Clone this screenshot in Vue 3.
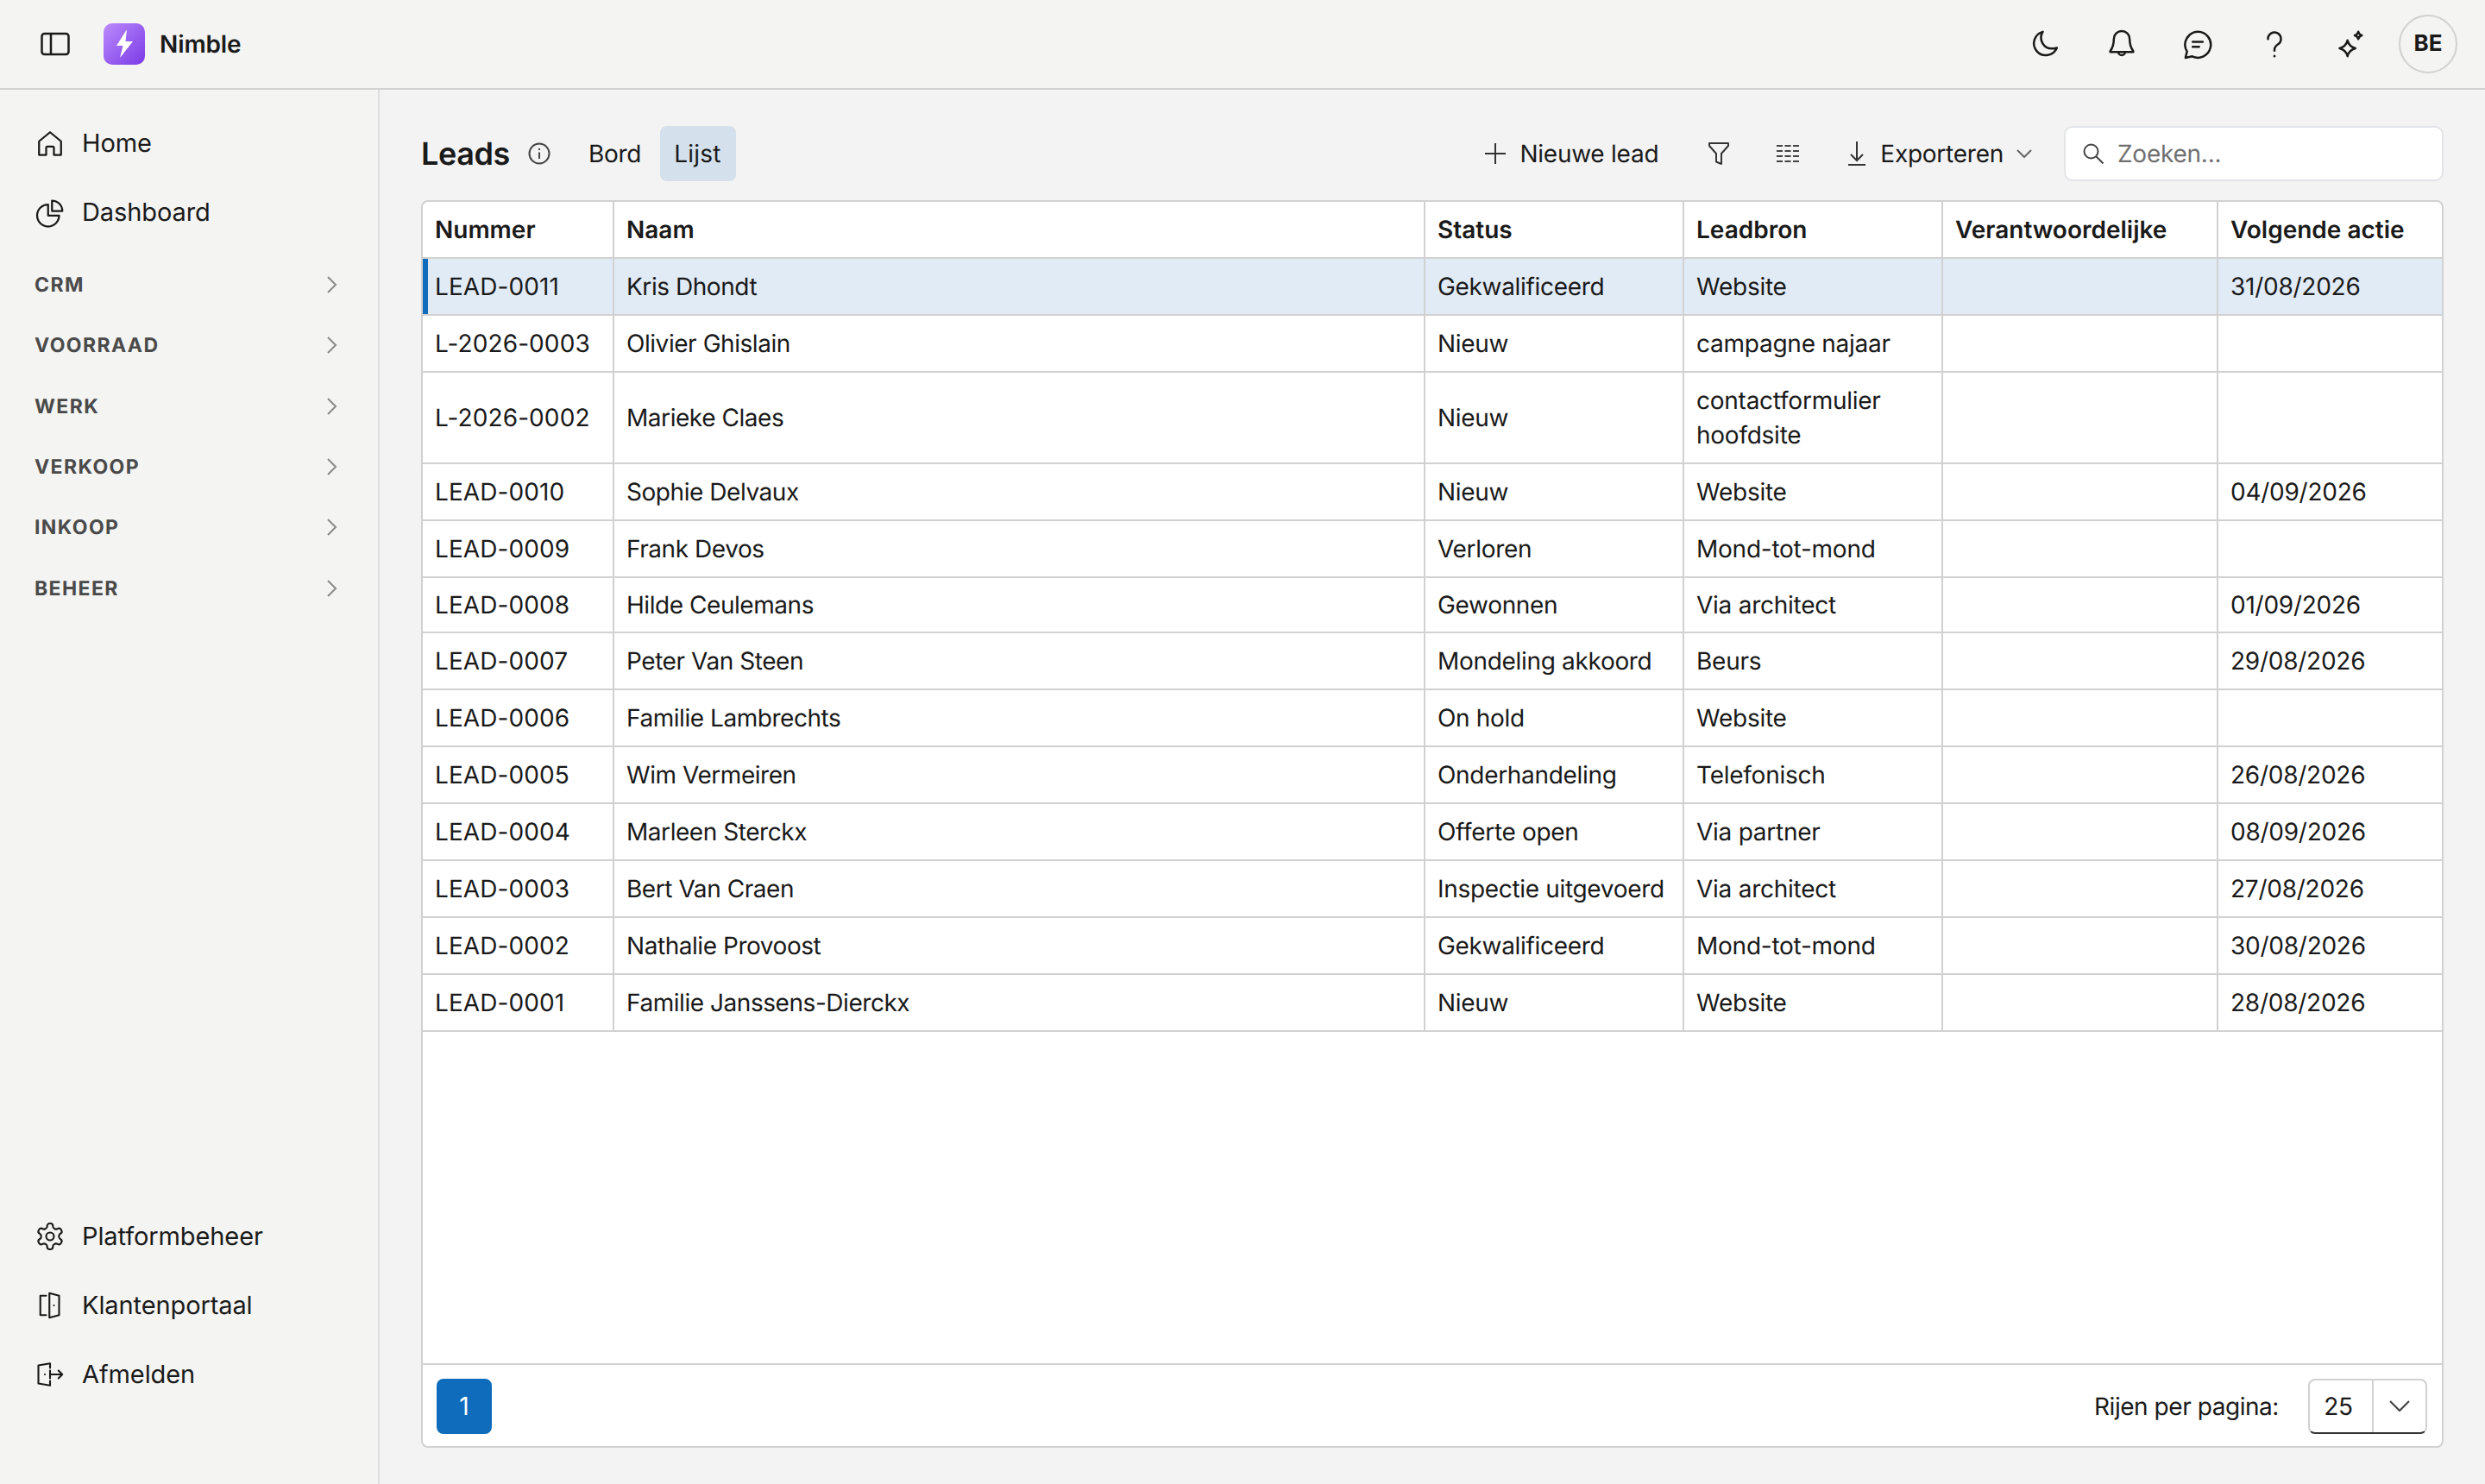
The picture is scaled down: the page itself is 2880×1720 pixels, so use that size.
<template>
  <div class="app">
    <header class="topbar">
      <div class="brand">
        <svg class="panel-icon" width="36" height="30" viewBox="0 0 36 30" fill="none" stroke="currentColor" stroke-width="2.5">
          <rect x="2.5" y="3" width="31" height="24" rx="3" />
          <path d="M13 3v24" />
        </svg>
        <div class="logo">
          <svg width="28" height="34" viewBox="0 0 28 34"><path fill="#fff" d="M17 0 5 19h7.500L9 33 24 14h-8.500z" /></svg>
        </div>
        <span class="brand-name">Nimble</span>
      </div>
      <div class="top-actions">
        <svg v-for="icon in topIcons" :key="icon.name" class="top-icon" width="40" height="40" viewBox="0 0 24 24" fill="none" stroke="currentColor" stroke-width="1.5" stroke-linecap="round" stroke-linejoin="round">
          <path v-for="d in icon.paths" :key="d" :d="d" />
        </svg>
        <div class="avatar">BE</div>
      </div>
    </header>

    <div class="body">
      <aside class="sidebar">
        <nav>
          <a v-for="item in mainNav" :key="item.label" class="nav-item">
            <svg width="36" height="36" viewBox="0 0 24 24" fill="none" stroke="currentColor" stroke-width="1.5" stroke-linecap="round" stroke-linejoin="round">
              <path v-for="d in item.paths" :key="d" :d="d" />
            </svg>
            {{ item.label }}
          </a>
          <div class="sections">
            <div v-for="section in sections" :key="section" class="section">
              <span>{{ section }}</span>
              <svg width="14" height="22" viewBox="0 0 14 22" fill="none" stroke="#8a8a8a" stroke-width="2"><path d="M2 2l9 9-9 9" /></svg>
            </div>
          </div>
        </nav>
        <nav class="nav-bottom">
          <a v-for="item in bottomNav" :key="item.label" class="nav-item">
            <svg width="36" height="36" viewBox="0 0 24 24" fill="none" stroke="currentColor" stroke-width="1.4" stroke-linecap="round" stroke-linejoin="round">
              <path v-for="d in item.paths" :key="d" :d="d" />
            </svg>
            {{ item.label }}
          </a>
        </nav>
      </aside>

      <main class="main">
        <div class="toolbar">
          <h1>Leads</h1>
          <svg class="info" width="28" height="28" viewBox="0 0 28 28" fill="none" stroke="#444" stroke-width="2">
            <circle cx="14" cy="14" r="11.500" />
            <path d="M14 12.500v7.500M14 8v2" />
          </svg>
          <div class="tabs">
            <span class="tab">Bord</span>
            <span class="tab active">Lijst</span>
          </div>
          <div class="tools">
            <span class="tool new-lead">
              <svg width="24" height="24" viewBox="0 0 24 24" stroke="#333" stroke-width="2"><path d="M12 0v24M0 12h24" /></svg>
              Nieuwe lead
            </span>
            <svg class="filter" width="24" height="28" viewBox="0 0 24 28" fill="none" stroke="#333" stroke-width="2" stroke-linejoin="round"><path d="M1 2h22v3l-8 9v12l-6-2.500V14L1 5z" /></svg>
            <svg class="columns" width="26" height="22" viewBox="0 0 26 22" stroke="#444" stroke-width="2" stroke-dasharray="7 2.500"><path d="M0 2h26M0 8h26M0 14h26M0 20h26" /></svg>
            <span class="tool export">
              <svg width="20" height="28" viewBox="0 0 20 28" fill="none" stroke="#333" stroke-width="2"><path d="M10 0v22M3 15l7 7 7-7M0 27h20" /></svg>
              Exporteren
              <svg class="export-chev" width="18" height="12" viewBox="0 0 18 12" fill="none" stroke="#666" stroke-width="2"><path d="M1 2l8 8 8-8" /></svg>
            </span>
            <label class="search">
              <svg width="24" height="24" viewBox="0 0 24 24" fill="none" stroke="#444" stroke-width="2"><circle cx="9.500" cy="9.500" r="8" /><path d="M15.500 15.500l8 8" /></svg>
              <input type="text" placeholder="Zoeken..." />
            </label>
          </div>
        </div>

        <div class="card">
          <div class="table-area">
            <table class="table">
              <colgroup>
                <col v-for="w in colWidths" :key="w.key" :style="{ width: w.width + 'px' }" />
              </colgroup>
              <thead>
                <tr>
                  <th v-for="column in columns" :key="column">{{ column }}</th>
                </tr>
              </thead>
              <tbody>
                <tr v-for="(row, i) in leads" :key="row.nummer" :class="{ selected: i === 0, short: row.nummer === 'LEAD-0008' }">
                  <td class="nummer">{{ row.nummer }}</td>
                  <td class="naam">{{ row.naam }}</td>
                  <td class="status">{{ row.status }}</td>
                  <td>{{ row.bron }}</td>
                  <td></td>
                  <td>{{ row.actie }}</td>
                </tr>
              </tbody>
            </table>
          </div>
          <footer class="card-footer">
            <button class="page-btn">1</button>
            <div class="per-page">
              <span class="per-page-label">Rijen per pagina:</span>
              <div class="select">
                <span class="select-value">25</span>
                <span class="select-arrow">
                  <svg width="26" height="16" viewBox="0 0 26 16" fill="none" stroke="#444" stroke-width="2.200"><path d="M2 2l11 11L24 2" /></svg>
                </span>
              </div>
            </div>
          </footer>
        </div>
      </main>
    </div>
  </div>
</template>

<script setup>
const topIcons = [
  { name: 'moon', paths: ['M10.500 3.500a8.300 8.300 0 1 0 9.800 11.200 7.500 7.500 0 0 1-3 .5 7.600 7.600 0 0 1-6.800-11.700z'] },
  { name: 'bell', paths: ['M12 3a5.500 5.500 0 0 0-5.500 5.500c0 5-1.500 7-2.500 8.500v.5h16V17c-1-1.500-2.500-3.500-2.500-8.500A5.500 5.500 0 0 0 12 3z', 'M9.700 17.500a2.300 2.300 0 0 0 4.600 0'] },
  { name: 'chat', paths: ['M12 3.500a9 9 0 1 1-3.800 17.100l-4.700 1 1.100-4.400A9 9 0 0 1 12 3.500z', 'M8.500 10.500h7M8.500 14h4.500'] },
  { name: 'help', paths: ['M7.500 8.500a4.500 4.500 0 1 1 7 3.700c-1.500 1-2.500 2-2.500 4v.5', 'M12 20.300v.2'] },
  { name: 'sparkle', paths: ['M10 9.500c.7 3 2.300 4.700 5.500 5.500-3.200.8-4.800 2.500-5.500 5.500-.7-3-2.300-4.700-5.500-5.500 3.200-.8 4.800-2.500 5.500-5.500z', 'M17.500 3.500c.3 1.400 1 2.100 2.500 2.500-1.500.4-2.200 1.100-2.500 2.500-.3-1.400-1-2.100-2.500-2.500 1.500-.4 2.200-1.100 2.500-2.500z'] }
];

const mainNav = [
  { label: 'Home', paths: ['M3.500 10.500 12 3.500l8.500 7V21h-5.500v-5.500a1 1 0 0 0-1-1h-4a1 1 0 0 0-1 1V21H3.500z'] },
  { label: 'Dashboard', paths: ['M10.500 6a8.500 8.500 0 1 0 8.500 8.500h-8.500z', 'M13.500 3v8h8A8 8 0 0 0 13.500 3z'] }
];

const sections = ['CRM', 'VOORRAAD', 'WERK', 'VERKOOP', 'INKOOP', 'BEHEER'];

const bottomNav = [
  { label: 'Platformbeheer', paths: ['M12.220 2h-.44a2 2 0 0 0-2 2v.18a2 2 0 0 1-1 1.730l-.43.25a2 2 0 0 1-2 0l-.15-.08a2 2 0 0 0-2.730.73l-.22.38a2 2 0 0 0 .73 2.730l.15.1a2 2 0 0 1 1 1.720v.51a2 2 0 0 1-1 1.740l-.15.09a2 2 0 0 0-.73 2.730l.22.38a2 2 0 0 0 2.730.73l.15-.08a2 2 0 0 1 2 0l.43.25a2 2 0 0 1 1 1.730V20a2 2 0 0 0 2 2h.44a2 2 0 0 0 2-2v-.18a2 2 0 0 1 1-1.730l.43-.25a2 2 0 0 1 2 0l.15.08a2 2 0 0 0 2.730-.73l.22-.39a2 2 0 0 0-.73-2.730l-.15-.08a2 2 0 0 1-1-1.740v-.5a2 2 0 0 1 1-1.740l.15-.09a2 2 0 0 0 .73-2.730l-.22-.38a2 2 0 0 0-2.730-.73l-.15.08a2 2 0 0 1-2 0l-.43-.25a2 2 0 0 1-1-1.730V4a2 2 0 0 0-2-2z', 'M15 12a3 3 0 1 1-6 0 3 3 0 0 1 6 0z'] },
  { label: 'Klantenportaal', paths: ['M9 4.500H4.500v15H9', 'M11.500 2.500 19 4.500v15l-7.500 2z', 'M15 12h.01'] },
  { label: 'Afmelden', paths: ['M12 7V3.500L3 5v14l9 1.500V17', 'M12 12h9.500M18.500 9l3 3-3 3', 'M12 9v6', 'M8 12h.01'] }
];

const columns = ['Nummer', 'Naam', 'Status', 'Leadbron', 'Verantwoordelijke', 'Volgende actie'];

const colWidths = [
  { key: 'a', width: 222 },
  { key: 'b', width: 940 },
  { key: 'c', width: 300 },
  { key: 'd', width: 300 },
  { key: 'e', width: 319 },
  { key: 'f', width: 259 }
];

const leads = [
  { nummer: 'LEAD-0011', naam: 'Kris Dhondt', status: 'Gekwalificeerd', bron: 'Website', actie: '31/08/2026' },
  { nummer: 'L-2026-0003', naam: 'Olivier Ghislain', status: 'Nieuw', bron: 'campagne najaar', actie: '' },
  { nummer: 'L-2026-0002', naam: 'Marieke Claes', status: 'Nieuw', bron: 'contactformulier hoofdsite', actie: '' },
  { nummer: 'LEAD-0010', naam: 'Sophie Delvaux', status: 'Nieuw', bron: 'Website', actie: '04/09/2026' },
  { nummer: 'LEAD-0009', naam: 'Frank Devos', status: 'Verloren', bron: 'Mond-tot-mond', actie: '' },
  { nummer: 'LEAD-0008', naam: 'Hilde Ceulemans', status: 'Gewonnen', bron: 'Via architect', actie: '01/09/2026' },
  { nummer: 'LEAD-0007', naam: 'Peter Van Steen', status: 'Mondeling akkoord', bron: 'Beurs', actie: '29/08/2026' },
  { nummer: 'LEAD-0006', naam: 'Familie Lambrechts', status: 'On hold', bron: 'Website', actie: '' },
  { nummer: 'LEAD-0005', naam: 'Wim Vermeiren', status: 'Onderhandeling', bron: 'Telefonisch', actie: '26/08/2026' },
  { nummer: 'LEAD-0004', naam: 'Marleen Sterckx', status: 'Offerte open', bron: 'Via partner', actie: '08/09/2026' },
  { nummer: 'LEAD-0003', naam: 'Bert Van Craen', status: 'Inspectie uitgevoerd', bron: 'Via architect', actie: '27/08/2026' },
  { nummer: 'LEAD-0002', naam: 'Nathalie Provoost', status: 'Gekwalificeerd', bron: 'Mond-tot-mond', actie: '30/08/2026' },
  { nummer: 'LEAD-0001', naam: 'Familie Janssens-Dierckx', status: 'Nieuw', bron: 'Website', actie: '28/08/2026' }
];
</script>

<style>
body {
  background: #f3f3f3;
}
</style>

<style scoped>
.app {
  width: 2880px;
  height: 1720px;
  display: flex;
  flex-direction: column;
  font-family: Inter, "Liberation Sans", sans-serif;
  font-size: 28px;
  line-height: 40px;
  letter-spacing: -0.25px;
  color: #1a1a1a;
  text-rendering: geometricPrecision;
  overflow: hidden;
}

.topbar {
  height: 104px;
  flex: none;
  box-sizing: border-box;
  display: flex;
  align-items: center;
  justify-content: space-between;
  background: #f4f4f2;
  border-bottom: 2px solid #d1d1d1;
  padding: 0 32px 0 46px;
}

.brand {
  display: flex;
  align-items: center;
}

.panel-icon {
  margin-right: 38px;
}

.logo {
  width: 48px;
  height: 48px;
  border-radius: 10px;
  background: linear-gradient(135deg, #bb8bfd, #7a3ae6);
  display: flex;
  align-items: center;
  justify-content: center;
}

.brand-name {
  margin-left: 17px;
  font-size: 28px;
  font-weight: 600;
  letter-spacing: -0.1px;
}

.top-actions {
  display: flex;
  align-items: center;
}

.top-icon {
  margin-right: 48.5px;
}

.top-icon:last-of-type {
  margin-right: 36px;
}

.avatar {
  width: 68px;
  height: 68px;
  box-sizing: border-box;
  border: 2px solid #d1d1d1;
  border-radius: 50%;
  display: flex;
  align-items: center;
  justify-content: center;
  font-size: 26px;
  font-weight: 700;
  letter-spacing: 0;
}

.body {
  flex: 1;
  display: flex;
  min-height: 0;
}

.sidebar {
  width: 440px;
  flex: none;
  box-sizing: border-box;
  display: flex;
  flex-direction: column;
  justify-content: space-between;
  background: #f4f4f2;
  border-right: 2px solid #e0e0e4;
  padding: 22px 0 87px;
}

.nav-item {
  height: 80px;
  display: flex;
  align-items: center;
  gap: 19px;
  padding-left: 40px;
  font-size: 29px;
  letter-spacing: -0.1px;
}

.sections {
  margin-top: 9px;
}

.section {
  height: 70.3px;
  display: flex;
  align-items: center;
  justify-content: space-between;
  padding: 0 46px 0 40px;
  font-size: 23px;
  font-weight: 700;
  letter-spacing: 1.4px;
  color: #4a4a4a;
}

.main {
  flex: 1;
  min-width: 0;
  display: flex;
  flex-direction: column;
  padding: 42px 48px 42px 48px;
  background: #f3f3f3;
}

.toolbar {
  height: 64px;
  flex: none;
  display: flex;
  align-items: center;
  margin-bottom: 22px;
}

h1 {
  margin: 0;
  font-size: 36px;
  font-weight: 600;
  letter-spacing: -0.4px;
  line-height: 64px;
}

.info {
  margin-left: 20px;
}

.tabs {
  display: flex;
  gap: 6px;
  margin-left: 27px;
}

.tab {
  height: 64px;
  display: flex;
  align-items: center;
  padding: 0 16px;
  border-radius: 8px;
}

.tab.active {
  min-width: 88px;
  box-sizing: border-box;
  letter-spacing: 0.2px;
  background: #d4e1ec;
}

.tools {
  margin-left: auto;
  display: flex;
  align-items: center;
}

.tool {
  display: flex;
  align-items: center;
}

.new-lead svg {
  margin-right: 16px;
}

.filter {
  margin-left: 58px;
}

.columns {
  margin-left: 55px;
}

.export {
  margin-left: 57px;
}

.export svg:first-child {
  margin-right: 17px;
}

.export-chev {
  margin-left: 15px;
}

.search {
  width: 440px;
  height: 64px;
  box-sizing: border-box;
  margin-left: 37px;
  display: flex;
  align-items: center;
  gap: 16px;
  padding: 0 20px;
  background: #fff;
  border: 2px solid #e2e4e8;
  border-radius: 10px;
}

.search input {
  flex: 1;
  min-width: 0;
  border: none;
  outline: none;
  padding: 0;
  background: transparent;
  font: inherit;
  letter-spacing: inherit;
  text-rendering: geometricPrecision;
}

.search input::placeholder {
  color: #707070;
  opacity: 1;
}

.card {
  flex: 1;
  min-height: 0;
  display: flex;
  flex-direction: column;
  background: #fff;
  border: 2px solid #d1d1d1;
  border-radius: 8px;
  overflow: hidden;
}

.table-area {
  flex: 1;
  min-height: 0;
}

.table {
  width: 100%;
  table-layout: fixed;
  border-collapse: separate;
  border-spacing: 0;
}

.table th,
.table td {
  box-sizing: border-box;
  padding: 12px 14px;
  text-align: left;
  vertical-align: middle;
  border-right: 2px solid #d1d1d1;
  border-bottom: 2px solid #d1d1d1;
}

.table th:last-child,
.table td:last-child {
  border-right: none;
}

.table th {
  font-weight: 600;
  letter-spacing: 0;
}

.table td.nummer {
  letter-spacing: 0.1px;
}

.table td.naam {
  letter-spacing: -0.45px;
}

.table td.status {
  letter-spacing: -0.32px;
}

.table tr.short td {
  padding-top: 11px;
  padding-bottom: 11px;
}

.table tr.selected td {
  background: #e1ebf6;
}

.table tr.selected td:first-child {
  box-shadow: inset 6px 0 0 #0f6cbd;
}

.card-footer {
  height: 96px;
  flex: none;
  box-sizing: border-box;
  display: flex;
  align-items: center;
  justify-content: space-between;
  padding: 2px 17px 0 16px;
  border-top: 2px solid #d1d1d1;
}

.page-btn {
  width: 64px;
  height: 64px;
  border: none;
  border-radius: 8px;
  background: #0f6cbd;
  color: #fff;
  font: inherit;
}

.per-page {
  display: flex;
  align-items: center;
  gap: 34px;
}

.per-page-label {
  letter-spacing: -0.45px;
}

.select {
  width: 138px;
  height: 64px;
  box-sizing: border-box;
  display: flex;
  border: 2px solid #d1d1d1;
  border-bottom-color: #333;
  border-radius: 8px;
}

.select-value {
  width: 74px;
  box-sizing: border-box;
  padding-right: 6px;
  display: flex;
  align-items: center;
  justify-content: center;
  border-right: 2px solid #d1d1d1;
}

.select-arrow {
  flex: 1;
  display: flex;
  align-items: center;
  justify-content: center;
}
</style>
